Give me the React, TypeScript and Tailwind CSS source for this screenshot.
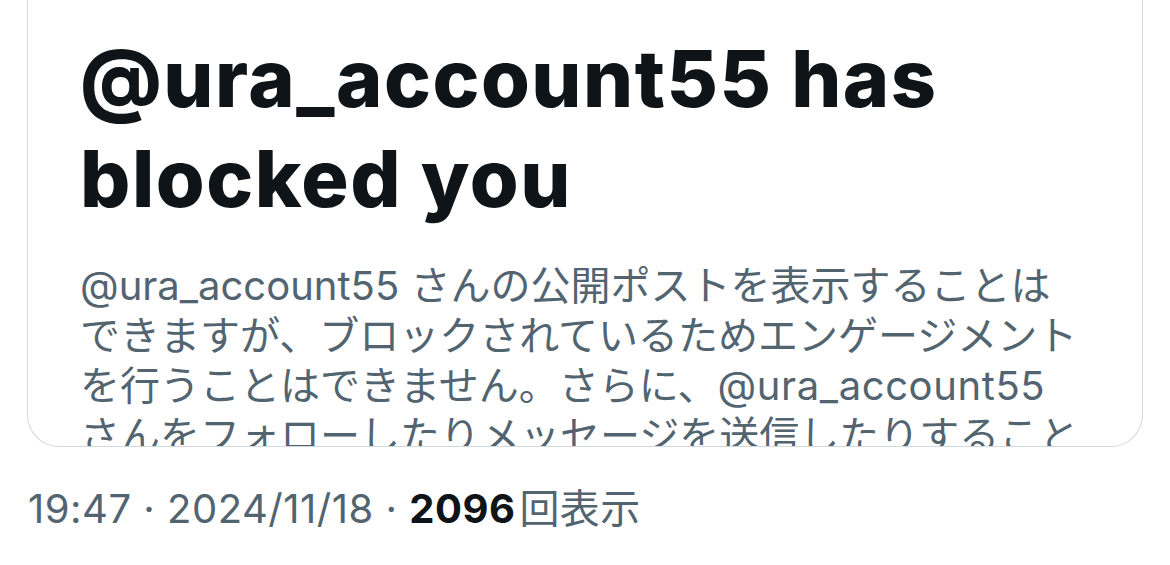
export default function App() {
  const handle = '@ura_account55'

  return (
    <div className="min-h-screen w-[1170px] bg-white pl-[27px] pr-[27px] font-['Inter','Noto_Sans_CJK_JP',sans-serif]">
      {/* Blocked card (top cut off by the screenshot) */}
      <div className="h-[447px] overflow-hidden rounded-b-[32px] border-x border-b border-[#cfd9de] pl-[52px] pr-[30px] pt-[28px]">
        <h1 className="text-[79px] font-extrabold leading-[100px] tracking-[1.5px] text-[#0f1419]">
          <span className="block whitespace-nowrap">{handle} has</span>
          <span className="block whitespace-nowrap">blocked you</span>
        </h1>

        <div className="mt-[33px] text-[40px] leading-[50px] text-[#536471]">
          <p className="whitespace-nowrap">{handle} さんの公開ポストを表示することは</p>
          <p className="whitespace-nowrap">できますが、ブロックされているためエンゲージメント</p>
          <p className="whitespace-nowrap">を行うことはできません。さらに、<span className="tracking-[0.6px]">{handle}</span></p>
          <p className="whitespace-nowrap">さんをフォローしたりメッセージを送信したりすること</p>
        </div>
      </div>

      {/* Timestamp + views */}
      <div className="mt-[38px] whitespace-nowrap pl-px text-[40px] leading-[48px] tracking-[0.5px] text-[#536471]">
        <span>19:47 · 2024/11/18 · </span>
        <span className="font-bold text-[#0f1419]">2096</span>
        <span className="ml-[4px]">回表示</span>
      </div>
    </div>
  )
}
